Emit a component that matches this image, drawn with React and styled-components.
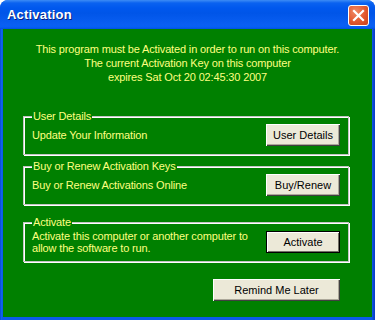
import React from 'react'
import styled, { createGlobalStyle } from 'styled-components'

const GlobalStyle = createGlobalStyle`
  html, body {
    margin: 0;
    padding: 0;
    background: #ffffff;
  }
  * {
    box-sizing: border-box;
  }
`

const Window = styled.div`
  width: 375px;
  height: 320px;
  display: flex;
  flex-direction: column;
  background: linear-gradient(to right, #0037c8 0, #166aee 1px, #0a5bea 2px, #0a5bea 372px, #0c3fc8 374px);
  border-radius: 8px 8px 0 0;
  font-family: "Liberation Sans", Arial, sans-serif;
  overflow: hidden;
`

const TitleBar = styled.div`
  height: 29px;
  flex: none;
  display: flex;
  align-items: center;
  justify-content: space-between;
  padding: 0 6px 0 7px;
  background: linear-gradient(to bottom, #3d8cf5 0, #0a62f0 3px, #0058ee 8px, #0055e8 45%, #0a5ff2 85%, #0660f4 93%, #0050e0 100%);
`

const Title = styled.span`
  color: #ffffff;
  font-weight: bold;
  font-size: 13px;
  letter-spacing: 0.2px;
  text-shadow: 1px 1px 0 #0a1f7a;
`

const CloseButton = styled.div`
  width: 21px;
  height: 21px;
  margin-top: 2px;
  display: flex;
  align-items: center;
  justify-content: center;
  border: 1px solid #ffffff;
  border-radius: 3px;
  background: radial-gradient(circle at 35% 30%, #f08a66 0, #e2582e 55%, #c8401a 100%);
`

const Body = styled.div`
  flex: 1;
  margin: 0 3px 3px;
  background: #008000;
  display: flex;
  flex-direction: column;
  color: #ffff80;
  font-size: 11px;
  letter-spacing: -0.15px;
`

const Message = styled.div`
  text-align: center;
  line-height: 14px;
  padding-top: 13px;
  margin-bottom: 25px;
`

const Group = styled.fieldset`
  margin: ${p => p.$top || 0}px 23px 0 20px;
  padding: 1px 8px ${p => p.$bottom ?? 8}px 8px;
  border: 1px solid #c4c4c4;
  box-shadow: inset 1px 1px 0 #ffffff, 1px 1px 0 #ffffff;
  min-width: 0;
`

const Legend = styled.legend`
  padding: 0 1px;
  line-height: 14px;
  background: #008000;
`

const Row = styled.div`
  display: flex;
  align-items: center;
  justify-content: space-between;
  min-height: 22px;
`

const Description = styled.span`
  line-height: 12px;
  white-space: nowrap;
`

const Button = styled.button`
  width: ${p => p.$width || 74}px;
  height: 22px;
  flex: none;
  padding: 0;
  font-family: "Liberation Sans", Arial, sans-serif;
  font-size: 11px;
  color: #000000;
  background: #ece9d8;
  border: none;
  box-shadow: ${p => p.$default
    ? 'inset 0 0 0 1px #000000, inset 1px 1px 0 1px #ffffff, inset -1px -1px 0 1px #716f64'
    : 'inset 1px 1px 0 #ffffff, inset -1px -1px 0 #404040, inset -2px -2px 0 #aca899'};
  cursor: pointer;
`

const Footer = styled.div`
  display: flex;
  justify-content: flex-end;
  padding: 17px 32px 0 0;
`

function CloseIcon () {
  return (
    <svg width='13' height='13' viewBox='0 0 13 13'>
      <path d='M2 2 L11 11 M11 2 L2 11' stroke='#ffffff' strokeWidth='2.2' strokeLinecap='square' />
    </svg>
  )
}

export default function App () {
  return (
    <>
      <GlobalStyle />
      <Window>
        <TitleBar>
          <Title>Activation</Title>
          <CloseButton><CloseIcon /></CloseButton>
        </TitleBar>
        <Body>
          <Message>
            This program must be Activated in order to run on this computer.<br />
            The current Activation Key on this computer<br />
            expires Sat Oct 20 02:45:30 2007
          </Message>
          <Group>
            <Legend>User Details</Legend>
            <Row>
              <Description>Update Your Information</Description>
              <Button>User Details</Button>
            </Row>
          </Group>
          <Group $top={4}>
            <Legend>Buy or Renew Activation Keys</Legend>
            <Row>
              <Description>Buy or Renew Activations Online</Description>
              <Button>Buy/Renew</Button>
            </Row>
          </Group>
          <Group $top={10} $bottom={7}>
            <Legend>Activate</Legend>
            <Row>
              <Description>
                Activate this computer or another computer to<br />
                allow the software to run.
              </Description>
              <Button $default>Activate</Button>
            </Row>
          </Group>
          <Footer>
            <Button $width={127}>Remind Me Later</Button>
          </Footer>
        </Body>
      </Window>
    </>
  )
}
